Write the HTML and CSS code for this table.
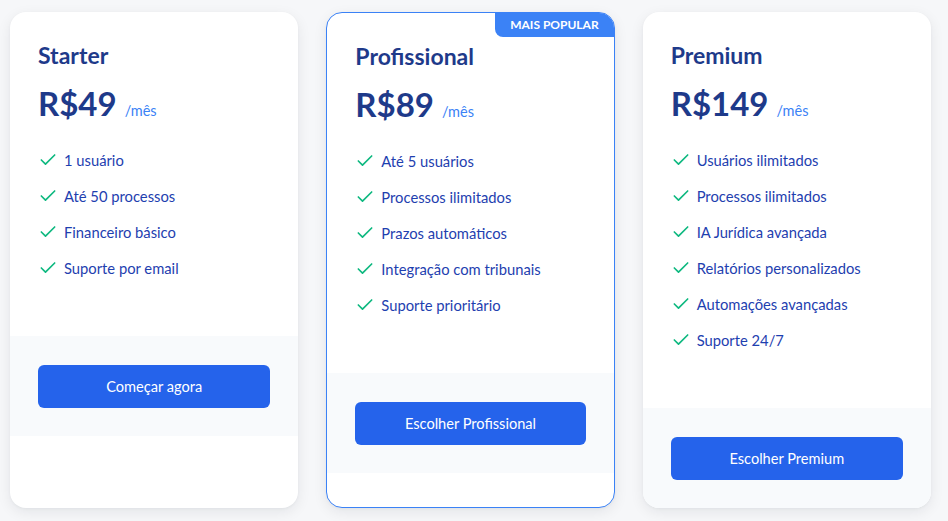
FILE: index.html
```html
<!DOCTYPE html>
<html lang="pt-BR">
<head>
<meta charset="utf-8">
<title>Planos</title>
<link rel="stylesheet" href="styles.css">
</head>
<body>
<main class="plans">
  <section class="card">
    <div class="card-body">
      <h3 class="plan-name">Starter</h3>
      <div class="price-row"><span class="price">R$49</span><span class="period">/mês</span></div>
      <ul class="features">
        <li><svg class="check" viewBox="0 0 24 24"><path d="M20 6 9 17l-5-5"/></svg>1 usuário</li>
        <li><svg class="check" viewBox="0 0 24 24"><path d="M20 6 9 17l-5-5"/></svg>Até 50 processos</li>
        <li><svg class="check" viewBox="0 0 24 24"><path d="M20 6 9 17l-5-5"/></svg>Financeiro básico</li>
        <li><svg class="check" viewBox="0 0 24 24"><path d="M20 6 9 17l-5-5"/></svg>Suporte por email</li>
      </ul>
    </div>
    <div class="card-foot"><button class="btn">Começar agora</button></div>
  </section>

  <section class="card card-popular">
    <span class="badge">MAIS POPULAR</span>
    <div class="card-body">
      <h3 class="plan-name">Profissional</h3>
      <div class="price-row"><span class="price">R$89</span><span class="period">/mês</span></div>
      <ul class="features">
        <li><svg class="check" viewBox="0 0 24 24"><path d="M20 6 9 17l-5-5"/></svg>Até 5 usuários</li>
        <li><svg class="check" viewBox="0 0 24 24"><path d="M20 6 9 17l-5-5"/></svg>Processos ilimitados</li>
        <li><svg class="check" viewBox="0 0 24 24"><path d="M20 6 9 17l-5-5"/></svg>Prazos automáticos</li>
        <li><svg class="check" viewBox="0 0 24 24"><path d="M20 6 9 17l-5-5"/></svg>Integração com tribunais</li>
        <li><svg class="check" viewBox="0 0 24 24"><path d="M20 6 9 17l-5-5"/></svg>Suporte prioritário</li>
      </ul>
    </div>
    <div class="card-foot"><button class="btn">Escolher Profissional</button></div>
  </section>

  <section class="card">
    <div class="card-body">
      <h3 class="plan-name">Premium</h3>
      <div class="price-row"><span class="price">R$149</span><span class="period">/mês</span></div>
      <ul class="features">
        <li><svg class="check" viewBox="0 0 24 24"><path d="M20 6 9 17l-5-5"/></svg>Usuários ilimitados</li>
        <li><svg class="check" viewBox="0 0 24 24"><path d="M20 6 9 17l-5-5"/></svg>Processos ilimitados</li>
        <li><svg class="check" viewBox="0 0 24 24"><path d="M20 6 9 17l-5-5"/></svg>IA Jurídica avançada</li>
        <li><svg class="check" viewBox="0 0 24 24"><path d="M20 6 9 17l-5-5"/></svg>Relatórios personalizados</li>
        <li><svg class="check" viewBox="0 0 24 24"><path d="M20 6 9 17l-5-5"/></svg>Automações avançadas</li>
        <li><svg class="check" viewBox="0 0 24 24"><path d="M20 6 9 17l-5-5"/></svg>Suporte 24/7</li>
      </ul>
    </div>
    <div class="card-foot"><button class="btn">Escolher Premium</button></div>
  </section>
</main>
</body>
</html>
```

FILE: styles.css
```css
* { box-sizing: border-box; }

html, body {
  margin: 0;
  background: #f6f7f9;
  font-family: "Lato", "Noto Sans", sans-serif;
}

.plans {
  display: grid;
  grid-template-columns: repeat(3, 1fr);
  column-gap: 28px;
  padding: 12px 17px 13px 10px;
  align-items: stretch;
}

.card {
  position: relative;
  background: #ffffff;
  border-radius: 16px;
  box-shadow: 0 4px 14px rgba(15, 23, 42, 0.08), 0 1px 3px rgba(15, 23, 42, 0.04);
  overflow: hidden;
}

.card-popular {
  border: 1px solid #3b82f6;
}

.badge {
  position: absolute;
  top: 0;
  right: 0;
  background: #3b82f6;
  color: #ffffff;
  font-size: 12px;
  font-weight: 700;
  line-height: 16px;
  padding: 4px 15px;
  border-bottom-left-radius: 8px;
}

.card-body {
  padding: 28px 28px 58px;
}

.plan-name {
  margin: 0;
  font-size: 23px;
  line-height: 30px;
  font-weight: 700;
  color: #1e3a8a;
}

.price-row {
  margin-top: 13px;
  display: flex;
  align-items: baseline;
  gap: 8px;
  height: 40px;
}

.price {
  font-size: 33px;
  line-height: 40px;
  font-weight: 700;
  color: #1e3a8a;
}

.period {
  font-size: 14.5px;
  color: #3b82f6;
}

.features {
  list-style: none;
  margin: 27px 0 0;
  padding: 0;
  display: flex;
  flex-direction: column;
  gap: 16px;
}

.features li {
  display: flex;
  align-items: center;
  gap: 6px;
  font-size: 14.75px;
  line-height: 20px;
  color: #1e40af;
}

.check {
  width: 20px;
  height: 20px;
  flex: none;
  fill: none;
  stroke: #10b981;
  stroke-width: 2;
  stroke-linecap: round;
  stroke-linejoin: round;
}

.card-foot {
  background: #f8fafc;
  padding: 29px 28px 28px;
}

.btn {
  display: block;
  width: 100%;
  height: 43px;
  border: 0;
  border-radius: 6px;
  background: #2563eb;
  color: #ffffff;
  font-family: inherit;
  font-size: 14.6px;
  font-weight: 400;
}
```
